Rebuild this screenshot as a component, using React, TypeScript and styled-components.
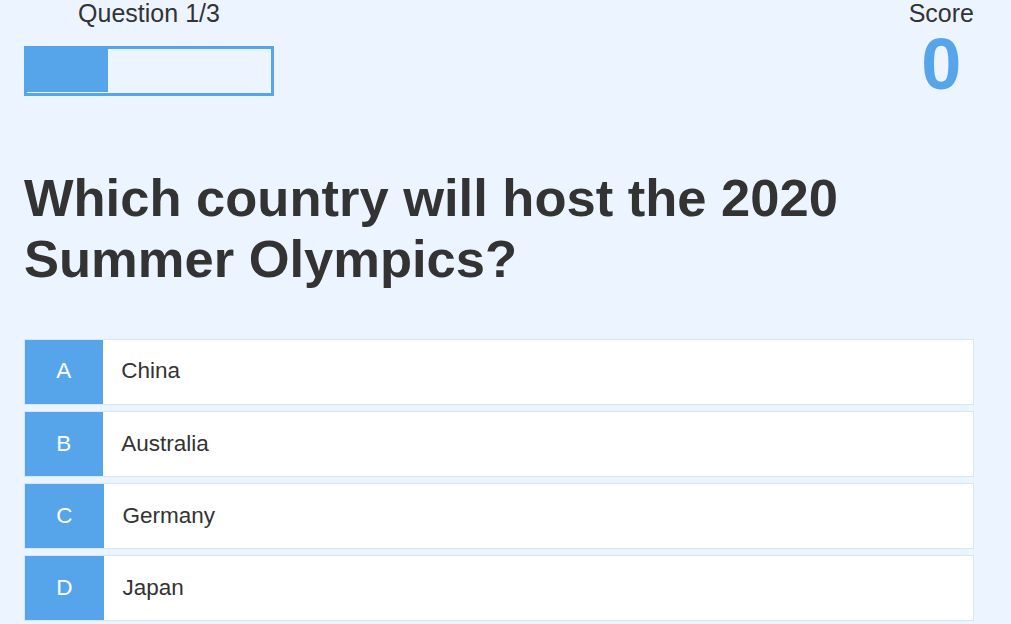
import styled, { createGlobalStyle } from 'styled-components';

const GlobalStyle = createGlobalStyle`
    html, body {
        margin: 0;
        background-color: #ecf5ff;
        color: #333;
        font-family: 'Liberation Sans', Arial, sans-serif;
    }
    * {
        box-sizing: border-box;
    }
`;

const Container = styled.main`
    width: 950px;
    margin: -1.5px 0 0 24px;
`;

const Hud = styled.header`
    display: flex;
    justify-content: space-between;
    align-items: flex-start;
`;

const HudItem = styled.div`
    display: flex;
    flex-direction: column;
    align-items: center;
`;

const HudPrefix = styled.p`
    margin: 0;
    font-size: 25px;
    text-align: center;
`;

const HudMainText = styled.h1`
    margin: 0;
    font-size: 72px;
    font-weight: 700;
    line-height: 1;
    color: #56a5eb;
    text-align: center;
`;

const ProgressBar = styled.div`
    width: 250px;
    height: 50px;
    margin-top: 18.75px;
    border: 3.75px solid #56a5eb;
`;

const ProgressBarFull = styled.div<{ $progress: number }>`
    height: 42.5px;
    width: ${(p) => p.$progress}%;
    background-color: #56a5eb;
`;

const Question = styled.h2`
    margin: 67px 0 50px;
    font-size: 52.5px;
    font-weight: 700;
    line-height: normal;
`;

const ChoiceList = styled.ul`
    list-style: none;
    margin: 0;
    padding: 0;
`;

const Choice = styled.li`
    display: flex;
    width: 100%;
    margin-bottom: 6.25px;
    font-size: 22.5px;
    line-height: 26.5px;
    background-color: #fff;
    border: 1.25px solid rgba(86, 165, 235, 0.25);
    cursor: pointer;
`;

const ChoicePrefix = styled.span`
    padding: 18.75px 31.25px;
    background-color: #56a5eb;
    color: #fff;
`;

const ChoiceText = styled.span`
    flex: 1;
    padding: 18.75px;
`;

const choices = [
    { letter: 'A', text: 'China' },
    { letter: 'B', text: 'Australia' },
    { letter: 'C', text: 'Germany' },
    { letter: 'D', text: 'Japan' },
];

export default function App() {
    const questionCounter = 1;
    const maxQuestions = 3;

    return (
        <>
            <GlobalStyle />
            <Container>
                <Hud>
                    <HudItem>
                        <HudPrefix>
                            Question {questionCounter}/{maxQuestions}
                        </HudPrefix>
                        <ProgressBar>
                            <ProgressBarFull $progress={(questionCounter / maxQuestions) * 100} />
                        </ProgressBar>
                    </HudItem>
                    <HudItem>
                        <HudPrefix>Score</HudPrefix>
                        <HudMainText>0</HudMainText>
                    </HudItem>
                </Hud>

                <Question>Which country will host the 2020 Summer Olympics?</Question>

                <ChoiceList>
                    {choices.map((c) => (
                        <Choice key={c.letter}>
                            <ChoicePrefix>{c.letter}</ChoicePrefix>
                            <ChoiceText>{c.text}</ChoiceText>
                        </Choice>
                    ))}
                </ChoiceList>
            </Container>
        </>
    );
}
